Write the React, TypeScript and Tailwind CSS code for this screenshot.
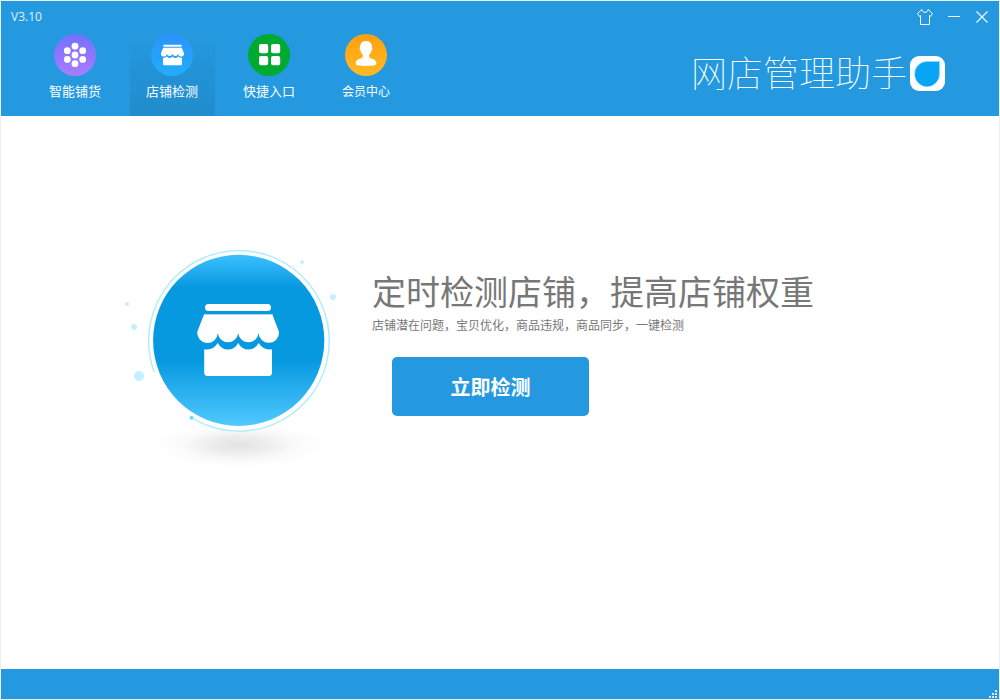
import React, { useState } from 'react';

interface Tab {
  id: string;
  label: string;
  labelClass: string;
  icon: React.ReactNode;
}

const DistributeIcon: React.FC = () => (
  <svg viewBox="0 0 42 42" className="size-[42px]" aria-hidden="true">
    <defs>
      <linearGradient id="purple" x1="0" y1="0" x2="0" y2="1">
        <stop offset="0" stopColor="#7470ff" />
        <stop offset="1" stopColor="#a97cff" />
      </linearGradient>
    </defs>
    <circle cx="21" cy="21" r="21" fill="url(#purple)" />
    <g fill="#fff">
      <circle cx="21" cy="21" r="3.4" />
      <circle cx="21" cy="12.2" r="3.4" />
      <circle cx="21" cy="29.7" r="3.4" />
      <circle cx="13.3" cy="16.7" r="3.4" />
      <circle cx="28.7" cy="16.7" r="3.4" />
      <circle cx="13.3" cy="25.4" r="3.4" />
      <circle cx="28.7" cy="25.4" r="3.4" />
    </g>
  </svg>
);

const StoreIcon: React.FC = () => (
  <svg viewBox="0 0 42 42" className="size-[42px]" aria-hidden="true">
    <defs>
      <linearGradient id="sky" x1="0" y1="0" x2="0" y2="1">
        <stop offset="0" stopColor="#2b93ff" />
        <stop offset="1" stopColor="#22aef8" />
      </linearGradient>
    </defs>
    <circle cx="21" cy="21" r="21" fill="url(#sky)" />
    <g fill="#fff">
      <rect x="12.2" y="10.8" width="18.6" height="2" rx="1" />
      <path d="M12.2 13.8H30.8L33 19.2A2.9 2.9 0 0 1 27.2 20A3.1 3.1 0 0 1 21.5 20A3.1 3.1 0 0 1 15.8 20A2.9 2.9 0 0 1 10 19.2Z" />
      <path d="M12 24Q14.4 24 15.8 22.6Q18.6 25.6 21.5 22.6Q24.4 25.6 27.2 22.6Q28.6 24 31 24V30A1.2 1.2 0 0 1 29.8 31.2H13.2A1.2 1.2 0 0 1 12 30Z" />
    </g>
  </svg>
);

const GridIcon: React.FC = () => (
  <svg viewBox="0 0 42 42" className="size-[42px]" aria-hidden="true">
    <circle cx="21" cy="21" r="21" fill="#00a92f" />
    <g fill="#fff">
      <rect x="11" y="10" width="9.2" height="9.2" rx="2" />
      <rect x="23" y="10" width="9.2" height="9.2" rx="2" />
      <rect x="11" y="22" width="9.2" height="9.2" rx="2" />
      <rect x="23" y="22" width="9.2" height="9.2" rx="2" />
    </g>
  </svg>
);

const MemberIcon: React.FC = () => (
  <svg viewBox="0 0 42 42" className="size-[42px]" aria-hidden="true">
    <defs>
      <linearGradient id="amber" x1="0" y1="0" x2="0" y2="1">
        <stop offset="0" stopColor="#ff9f0e" />
        <stop offset="1" stopColor="#ffba25" />
      </linearGradient>
    </defs>
    <circle cx="21" cy="21" r="21" fill="url(#amber)" />
    <path
      fill="#fff"
      d="M21 7C25 7 27 9.6 27 13.2C27.6 13.6 27.5 15.6 26.5 16.4C26 18.6 25 20 24 21C23.9 23 24.6 23.8 26.4 24.4C29.6 25.4 31.2 26.4 31.2 28.6V30C31.2 31.2 27 32 21 32S10.8 31.2 10.8 30V28.6C10.8 26.4 12.4 25.4 15.6 24.4C17.4 23.8 18.1 23 18 21C17 20 16 18.6 15.5 16.4C14.5 15.6 14.4 13.6 15 13.2C15 9.6 17 7 21 7Z"
    />
  </svg>
);

const LogoMark: React.FC = () => (
  <svg viewBox="0 0 35 35" className="size-[35px]" aria-hidden="true">
    <rect width="35" height="35" rx="9" fill="#fff" />
    <path d="M17.5 5H30V18A12.8 12.8 0 1 1 17.5 5Z" fill="#8fd6fa" />
    <path d="M17.5 6H29V18A12 12.2 0 1 1 17.5 6Z" fill="#08a5f5" />
  </svg>
);

const StoreArtwork: React.FC = () => (
  <svg viewBox="0 0 220 225" className="h-[225px] w-[220px] shrink-0" aria-hidden="true">
    <defs>
      <linearGradient id="disc" x1="0" y1="0" x2="0" y2="1">
        <stop offset="0" stopColor="#3cc0ff" />
        <stop offset="0.19" stopColor="#0799e0" />
        <stop offset="0.62" stopColor="#0799e0" />
        <stop offset="1" stopColor="#50c9ff" />
      </linearGradient>
      <radialGradient id="shadow">
        <stop offset="0" stopColor="#000" stopOpacity="0.11" />
        <stop offset="0.3" stopColor="#000" stopOpacity="0.075" />
        <stop offset="0.6" stopColor="#000" stopOpacity="0.025" />
        <stop offset="0.8" stopColor="#000" stopOpacity="0.008" />
        <stop offset="1" stopColor="#000" stopOpacity="0" />
      </radialGradient>
    </defs>

    <ellipse cx="119" cy="200" rx="88" ry="25" fill="url(#shadow)" />
    <circle cx="118.7" cy="95.5" r="90.6" fill="#fff" />
    <path
      d="M34.2 127A90.3 90.3 0 1 1 71.5 172.7"
      fill="none"
      stroke="#b3ecff"
      strokeWidth="1.5"
    />
    <circle cx="71.5" cy="172.7" r="2" fill="#6cdcf8" />
    <circle cx="118.7" cy="95.4" r="85.6" fill="url(#disc)" />

    {/* Floating dots */}
    <g fill="#c5f0ff">
      <circle cx="7" cy="59" r="2" />
      <circle cx="14" cy="82" r="3" />
      <circle cx="19" cy="131" r="5" />
      <circle cx="182" cy="17" r="2" />
      <circle cx="213" cy="52" r="3" />
    </g>

    {/* Shop front */}
    <g fill="#fff">
      <rect x="85" y="59" width="66" height="7" rx="3.5" />
      <path d="M84.2 69H152.2L159 87A10.2 10.2 0 0 1 138.6 88.3A10.3 10.3 0 0 1 118.2 88.3A10.3 10.3 0 0 1 97.8 88.3A10.2 10.2 0 0 1 77.2 87Z" />
      <path d="M84.2 104.2Q92.5 106 97.8 98Q101.5 104.6 108 104.6T118.2 98Q121.8 104.6 128.4 104.6T138.6 98Q144 106 152 104.2V127.5A3.5 3.5 0 0 1 148.5 131H87.7A3.5 3.5 0 0 1 84.2 127.5Z" />
    </g>
    <path d="M84 69.5H152.4" stroke="#a9dbf5" strokeWidth="1" />
  </svg>
);

const TABS: Tab[] = [
  { id: 'distribute', label: '智能铺货', labelClass: 'text-[13px]', icon: <DistributeIcon /> },
  { id: 'check', label: '店铺检测', labelClass: 'text-[13px]', icon: <StoreIcon /> },
  { id: 'shortcut', label: '快捷入口', labelClass: 'text-[13px]', icon: <GridIcon /> },
  { id: 'member', label: '会员中心', labelClass: 'text-xs', icon: <MemberIcon /> },
];

const WindowControls: React.FC = () => (
  <div className="flex items-center gap-3">
    <button type="button" aria-label="换肤" className="flex size-[18px] items-center justify-center">
      <svg viewBox="0 0 18 18" className="size-[18px]" fill="none" stroke="#fff" strokeWidth="1">
        <path d="M6 1.5L1.5 5.5L3.5 8.5L4.5 7.5V16.5H13.5V7.5L14.5 8.5L16.5 5.5L12 1.5C11.6 3.4 10.6 4.4 9 4.4S6.4 3.4 6 1.5Z" />
      </svg>
    </button>
    <button type="button" aria-label="最小化" className="flex size-4 items-center justify-center">
      <svg viewBox="0 0 12 12" className="size-3" stroke="#fff" strokeWidth="1">
        <path d="M0 5.5H12" />
      </svg>
    </button>
    <button type="button" aria-label="关闭" className="flex size-4 items-center justify-center">
      <svg viewBox="0 0 12 12" className="size-3" stroke="#fff" strokeWidth="1.1">
        <path d="M0.5 0.5L11.5 11.5M11.5 0.5L0.5 11.5" />
      </svg>
    </button>
  </div>
);

export default function App() {
  const [active, setActive] = useState('check');

  return (
    <div className="flex min-h-screen flex-col border border-[#efefef] bg-white font-['Noto_Sans_CJK_SC',sans-serif]">
      <header className="bg-[#2599df] text-white">
        <div className="flex h-8 items-center justify-between pr-[9px] pb-px pl-2.5">
          <span className="font-['Open_Sans',sans-serif] text-xs text-white/85">V3.10</span>
          <WindowControls />
        </div>

        <div className="flex justify-between pr-[54px] pl-8">
          <nav className="flex gap-3">
            {TABS.map((tab) => (
              <button
                key={tab.id}
                type="button"
                onClick={() => setActive(tab.id)}
                className={`flex h-[83px] w-[85px] flex-col items-center gap-[5px] pt-px pr-px ${
                  active === tab.id ? 'bg-linear-to-b from-[#2599df] to-[#218ccd]' : ''
                }`}
              >
                {tab.icon}
                <span className={`leading-5 ${tab.labelClass}`}>{tab.label}</span>
              </button>
            ))}
          </nav>

          <div className="flex h-20 items-center gap-[3px]">
            <span className="pb-1 text-4xl leading-10 font-thin">网店管理助手</span>
            <LogoMark />
          </div>
        </div>
      </header>

      <main className="flex flex-1 items-start gap-8 pt-[129px] pl-[119px]">
        <StoreArtwork />
        <div className="pt-[29px] text-[#777]">
          <h1 className="font-['Liberation_Serif','Noto_Sans_CJK_SC',serif] text-[34px] leading-10">
            定时检测店铺，提高店铺权重
          </h1>
          <p className="mt-px text-xs leading-5">
            店铺潜在问题，宝贝优化，商品违规，商品同步，一键检测
          </p>
          <button
            type="button"
            className="mt-[22px] ml-5 h-[59px] w-[197px] rounded-[5px] bg-[#2599df] text-xl font-bold text-white hover:bg-[#218ccd]"
          >
            立即检测
          </button>
        </div>
      </main>

      <footer className="flex h-[30px] items-end justify-end bg-[#2599df] pr-px">
        <svg viewBox="0 0 9 9" className="size-[9px]" fill="#e6e6e6" aria-hidden="true">
          <rect x="6" y="0" width="2" height="2" />
          <rect x="3" y="3" width="2" height="2" />
          <rect x="6" y="3" width="2" height="2" />
          <rect x="0" y="6" width="2" height="2" />
          <rect x="3" y="6" width="2" height="2" />
          <rect x="6" y="6" width="2" height="2" />
        </svg>
      </footer>
    </div>
  );
}
